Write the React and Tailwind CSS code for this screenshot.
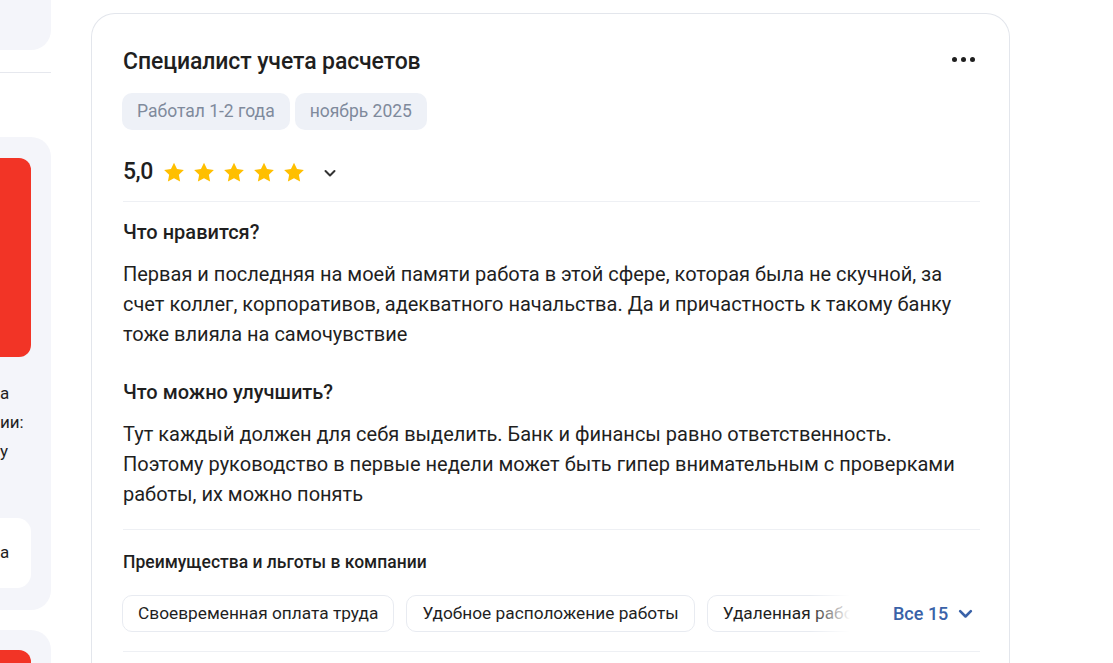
import React from "react";

const Star = () => (
  <svg width="22" height="21" viewBox="0 0 24 23" className="shrink-0">
    <path
      d="M12 0.8l3.3 6.9 7.5 1-5.5 5.2 1.4 7.5L12 17.8l-6.7 3.6 1.4-7.5L1.2 8.7l7.5-1z"
      fill="#ffbf00"
    />
  </svg>
);

const Chevron = ({ color = "#333", size = 16, width = 2 }) => (
  <svg width={size} height={size} viewBox="0 0 16 16" fill="none">
    <path d="M3.5 6l4.5 4.5L12.5 6" stroke={color} strokeWidth={width} strokeLinecap="round" strokeLinejoin="round" />
  </svg>
);

const benefits = [
  "Своевременная оплата труда",
  "Удобное расположение работы",
  "Удаленная работа",
];

export default function App() {
  return (
    <div
      className="w-[1113px] h-[663px] overflow-hidden bg-white flex text-[#1f1f1f]"
      style={{ fontFamily: "Roboto, 'Noto Sans', sans-serif" }}
    >
      {/* left column, cut off */}
      <div className="w-[51px] shrink-0 flex flex-col">
        <div className="h-[50px] shrink-0 bg-[#f4f5fa] rounded-br-[20px]" />
        <div className="h-px shrink-0 bg-[#e6e8ee] mt-[22px]" />
        <div className="shrink-0 mt-[64px] bg-[#f4f5fa] rounded-r-[20px] pt-[21px] pb-[22px] pr-[20px]">
          <div className="h-[199px] bg-[#f23426] rounded-r-[12px]" />
          <div className="mt-[22px] text-[17px] leading-[29px] text-[#1f1f1f]">
            <div>а</div>
            <div>ии:</div>
            <div>у</div>
          </div>
          <div className="mt-[52px] h-[70px] bg-white rounded-r-[14px] flex items-center text-[17px]">
            а
          </div>
        </div>
        <div className="shrink-0 mt-[20px] bg-[#f4f5fa] rounded-tr-[20px] pt-[20px] pr-[20px] h-[80px]">
          <div className="h-[60px] bg-[#f23426] rounded-tr-[12px]" />
        </div>
      </div>

      {/* main review card */}
      <div className="ml-[40px] mt-[13px] w-[919px] shrink-0 border border-[#e3e6ec] rounded-[24px] border-b-0 rounded-b-none pl-[31px] pr-[29px] pt-[32px]">
        <div className="flex items-start justify-between">
          <h2 className="text-[23px] font-medium leading-[32px] tracking-[-0.1px]">Специалист учета расчетов</h2>
          <div className="flex gap-[4px] mt-[11px] mr-[5px]">
            <span className="w-[5px] h-[5px] rounded-full bg-[#1f1f1f]" />
            <span className="w-[5px] h-[5px] rounded-full bg-[#1f1f1f]" />
            <span className="w-[5px] h-[5px] rounded-full bg-[#1f1f1f]" />
          </div>
        </div>

        <div className="flex gap-[5px] mt-[15px] -ml-px">
          <span className="h-[37px] px-[15px] flex items-center rounded-[10px] bg-[#eef1f7] text-[#7f8a9c] text-[17.5px]">
            Работал 1-2 года
          </span>
          <span className="h-[37px] px-[15px] flex items-center rounded-[10px] bg-[#eef1f7] text-[#7f8a9c] text-[17.5px]">
            ноябрь 2025
          </span>
        </div>

        <div className="flex items-center mt-[27px] h-[30px]">
          <span className="text-[23px] font-medium mr-[10px] tracking-[-0.5px]">5,0</span>
          <div className="flex gap-[8px]">
            <Star />
            <Star />
            <Star />
            <Star />
            <Star />
          </div>
          <span className="ml-[17px] mt-[2px]">
            <Chevron color="#333" size={16} />
          </span>
        </div>

        <div className="h-px bg-[#eef0f4] mt-[14px]" />

        <h3 className="mt-[18px] text-[20px] font-medium leading-[24px]">Что нравится?</h3>
        <p className="mt-[15px] text-[20px] leading-[30px] max-w-[850px]">
          Первая и последняя на моей памяти работа в этой сфере, которая была не скучной, за счет коллег, корпоративов, адекватного начальства. Да и причастность к такому банку тоже влияла на самочувствие
        </p>

        <h3 className="mt-[31px] text-[20px] font-medium leading-[24px]">Что можно улучшить?</h3>
        <p className="mt-[15px] text-[20px] leading-[30px] max-w-[850px]">
          Тут каждый должен для себя выделить. Банк и финансы равно ответственность. Поэтому руководство в первые недели может быть гипер внимательным с проверками работы, их можно понять
        </p>

        <div className="h-px bg-[#eef0f4] mt-[20px]" />

        <h4 className="mt-[20px] text-[17.5px] font-medium leading-[24px]">Преимущества и льготы в компании</h4>

        <div className="flex items-center mt-[21px] -ml-px">
          <div className="relative w-[728px] overflow-hidden">
            <div className="flex gap-[12px]">
              {benefits.map((b) => (
                <span
                  key={b}
                  className="h-[37px] px-[15px] shrink-0 flex items-center rounded-[10px] border border-[#e8ebf1] bg-white text-[17.3px] whitespace-nowrap"
                >
                  {b}
                </span>
              ))}
            </div>
            <div className="absolute right-0 top-0 h-full w-[40px] bg-gradient-to-r from-transparent to-white" />
          </div>
          <button className="ml-[43px] flex items-center gap-[8px] text-[18px] font-medium text-[#3a62a8]">
            Все 15
            <Chevron color="#3a62a8" size={19} width={2.2} />
          </button>
        </div>

        <div className="h-px bg-[#eef0f4] mt-[19px]" />
      </div>
    </div>
  );
}
